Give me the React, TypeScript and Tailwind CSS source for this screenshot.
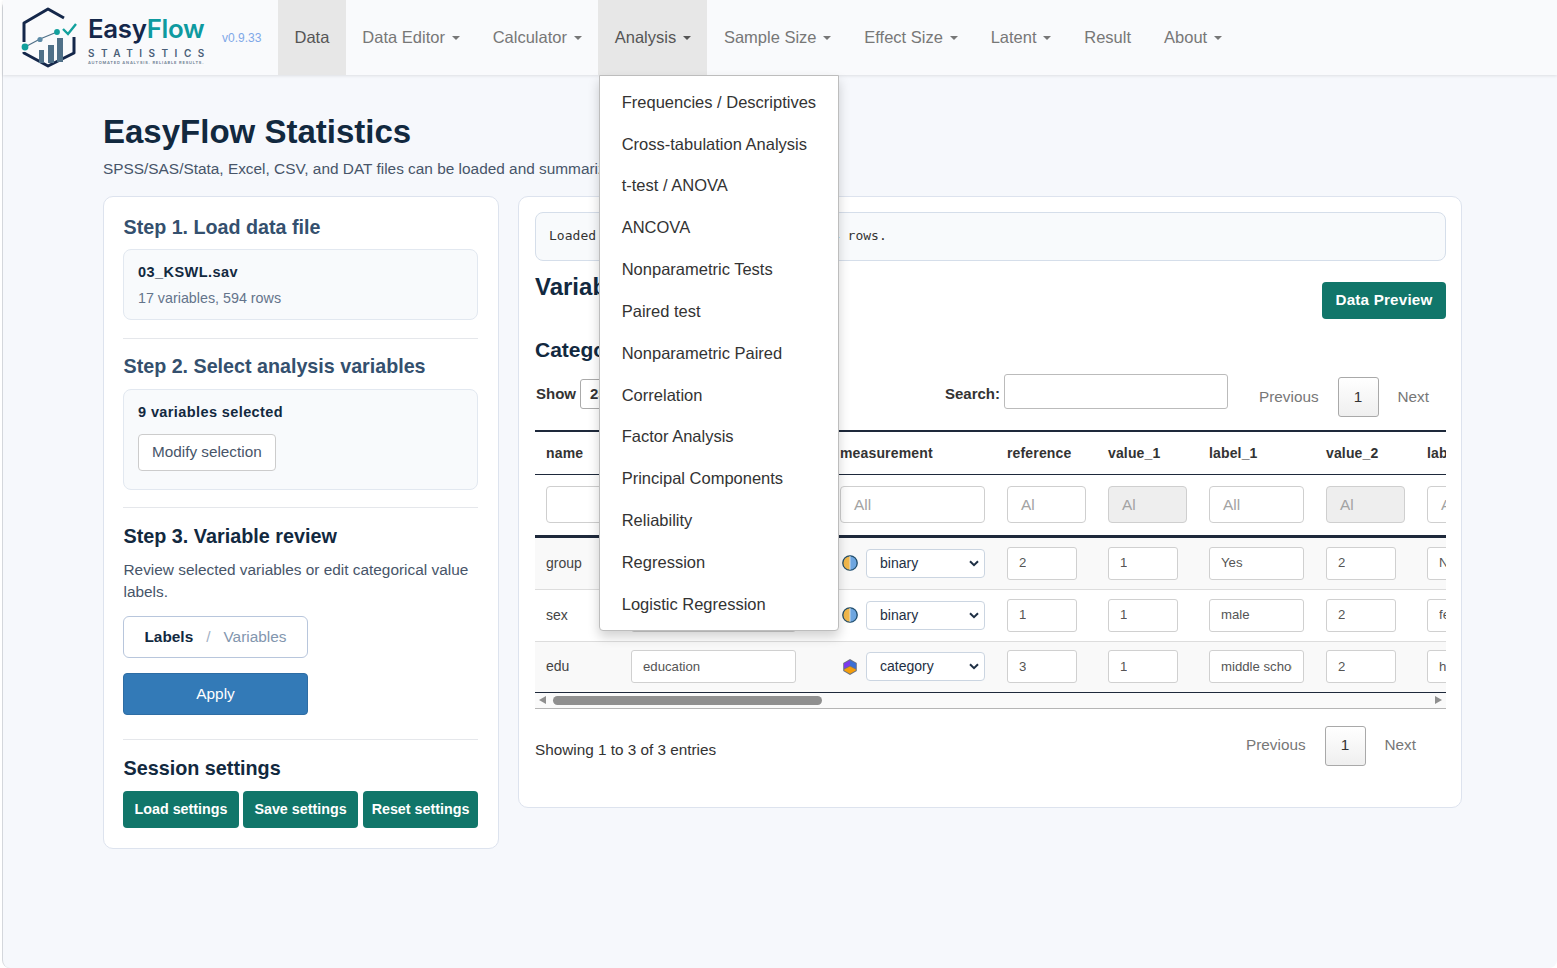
import React from 'react';

const navItems = [
  { label: 'Data', caret: false, active: true },
  { label: 'Data Editor', caret: true },
  { label: 'Calculator', caret: true },
  { label: 'Analysis', caret: true, active: true, open: true },
  { label: 'Sample Size', caret: true },
  { label: 'Effect Size', caret: true },
  { label: 'Latent', caret: true },
  { label: 'Result', caret: false },
  { label: 'About', caret: true },
];

const analysisMenu = [
  'Frequencies / Descriptives',
  'Cross-tabulation Analysis',
  't-test / ANOVA',
  'ANCOVA',
  'Nonparametric Tests',
  'Paired test',
  'Nonparametric Paired',
  'Correlation',
  'Factor Analysis',
  'Principal Components',
  'Reliability',
  'Regression',
  'Logistic Regression',
];

const rows = [
  { name: 'group', label: 'group', kind: 'binary', reference: '2', v1: '1', l1: 'Yes', v2: '2', l2: 'No', height: 'h-[53px]' },
  { name: 'sex', label: 'sex', kind: 'binary', reference: '1', v1: '1', l1: 'male', v2: '2', l2: 'female', height: 'h-[52px]' },
  { name: 'edu', label: 'education', kind: 'category', reference: '3', v1: '1', l1: 'middle school', v2: '2', l2: 'high school', height: 'h-[51px]' },
];

const Logo = () => (
  <svg width="60" height="62" viewBox="20 6 60 62" className="shrink-0">
    <path d="M24 41V22L48 8L64 17" fill="none" stroke="#14274a" strokeWidth="3" strokeLinejoin="round" />
    <path d="M24 51V52L48 65L74 52V36" fill="none" stroke="#14274a" strokeWidth="3" strokeLinejoin="round" />
    <rect x="39" y="49" width="5" height="13" fill="#4f7088" />
    <rect x="48" y="44" width="6" height="18" fill="#4f7088" />
    <rect x="57" y="37" width="6" height="24" fill="#4f7088" />
    <path d="M25 46L40 38L57 31" fill="none" stroke="#4f7088" strokeWidth="1.2" />
    <circle cx="25" cy="46" r="3.4" fill="#12a09d" />
    <circle cx="40" cy="38.5" r="2.6" fill="#5b8aa6" />
    <circle cx="57" cy="31" r="2.9" fill="#12a09d" />
    <path d="M63 28L68 33L76 23" fill="none" stroke="#12a09d" strokeWidth="2.4" />
  </svg>
);

const BinaryIcon = () => (
  <svg width="18" height="18" viewBox="0 0 18 18" className="shrink-0">
    <path d="M9 1.5A7.5 7.5 0 0 0 9 16.5Z" fill="#f2b84b" />
    <path d="M9 1.5A7.5 7.5 0 0 1 9 16.5Z" fill="#6ea6e0" />
    <circle cx="9" cy="9" r="7.2" fill="none" stroke="#24506e" strokeWidth="1.3" />
    <path d="M9 2V16" stroke="#dbe7f2" strokeWidth="0.8" />
  </svg>
);

const CategoryIcon = () => (
  <svg width="18" height="18" viewBox="0 0 18 18" className="shrink-0">
    <path d="M9 1L15.8 5V13L9 17L2.2 13V5Z" fill="#6b7280" />
    <path d="M9 2.2L3 5.6V10.6L9 7.6Z" fill="#7c3aed" />
    <path d="M9 2.2L15 5.6V10.6L9 7.6Z" fill="#3b6fd4" />
    <path d="M3.2 11.4L9 8.6L14.8 11.4V12.4L9 15.8L3.2 12.4Z" fill="#f59e0b" />
  </svg>
);

const ChevronDown = () => (
  <svg width="10" height="7" viewBox="0 0 10 7" className="shrink-0">
    <path d="M1 1.2L5 5.2L9 1.2" fill="none" stroke="#1e2f44" strokeWidth="2" />
  </svg>
);

const Caret = () => (
  <span className="ml-[6.75px] inline-block h-0 w-0 border-x-[4px] border-t-[4px] border-x-transparent border-t-current align-middle" />
);

const Pager = () => (
  <div className="flex items-center text-[15.3px] text-[#777]">
    <span>Previous</span>
    <span className="mx-[19px] flex h-[40px] w-[41px] items-center justify-center rounded-[3px] border border-[#a9a9a9] bg-gradient-to-b from-white to-[#efefef] text-[#333]">
      1
    </span>
    <span>Next</span>
  </div>
);

const TealButton = ({ children, className = '' }: { children: React.ReactNode; className?: string }) => (
  <button className={`h-[37px] rounded-[4px] bg-[#11766a] font-bold text-white ${className}`}>
    {children}
  </button>
);

const CellInput = ({ value, className = '' }: { value: string; className?: string }) => (
  <div className={`flex h-[33px] items-center rounded-[3px] border border-[#d0d0d0] bg-white px-[11px] text-[13.2px] text-[#555] ${className}`}>
    <span className="block overflow-hidden whitespace-nowrap">{value}</span>
  </div>
);

const FilterInput = ({ text = 'All', disabled, className = '' }: { text?: string; disabled?: boolean; className?: string }) => (
  <div className={`flex h-[37px] items-center overflow-hidden rounded-[4px] border border-[#cfcfcf] px-[13px] text-[15.4px] text-[#a3a3a3] ${disabled ? 'bg-[#eeeeee]' : 'bg-white'} ${className}`}>
    {text}
  </div>
);

const headers = ['name', 'label', 'measurement', 'reference', 'value_1', 'label_1', 'value_2', 'label_2'];

const App = () => {
  return (
    <div className="h-[968px] overflow-hidden bg-white pl-[2px] font-['Liberation_Sans',Arial,sans-serif]">
      <div className="h-full rounded-[8px] border-l border-[#d4d7dc] bg-[#f6f8fc]">
        {/* Navbar */}
        <nav className="relative z-20 flex h-[75px] items-stretch bg-[#f9fafc] shadow-[0_1px_3px_rgba(0,0,0,0.1)]">
          <div className="flex w-[275px] shrink-0 items-center pl-[17px]">
            <Logo />
            <div className="ml-[8px] mt-[4px] w-[120px] font-['Inter',sans-serif]">
              <div className="h-[30px] text-[25.8px] font-semibold leading-[30px] tracking-[-0.3px] text-[#14274a]">
                Easy<span className="text-[#0e9aa0]">Flow</span>
              </div>
              <div className="mt-[3px] text-[10px] font-semibold leading-[12px] tracking-[6.5px] text-[#4a5f78]">STATISTICS</div>
              <div className="mt-[1px] whitespace-nowrap text-[4px] font-semibold leading-[6px] tracking-[0.78px] text-[#6a7c90]">AUTOMATED ANALYSIS. RELIABLE RESULTS.</div>
            </div>
            <span className="ml-[14px] text-[12px] text-[#7fa8e8]">v0.9.33</span>
          </div>
          {navItems.map(item => (
            <div
              key={item.label}
              className={`relative flex items-center whitespace-nowrap px-[16.5px] text-[16.5px] ${item.active ? 'bg-[#e7e7e7] text-[#555]' : 'text-[#777]'}`}
            >
              {item.label}
              {item.caret && <Caret />}
              {item.open && (
                <div className="absolute left-[0.5px] top-full z-50 w-[240px] rounded-b-[4px] border border-[#bdbdbd] bg-white py-[5.3px] shadow-[0_6px_12px_rgba(0,0,0,0.18)]">
                  {analysisMenu.map(entry => (
                    <div key={entry} className="flex h-[41.83px] items-center px-[22px] text-[16.5px] text-[#333]">
                      {entry}
                    </div>
                  ))}
                </div>
              )}
            </div>
          ))}
        </nav>

        {/* Page body */}
        <main className="pl-[100px] pt-[36px]">
          <h1 className="text-[33px] font-bold leading-[42px] text-[#12293f]">EasyFlow Statistics</h1>
          <p className="mt-[6px] whitespace-nowrap text-[15.4px] leading-[20px] text-[#475569]">
            SPSS/SAS/Stata, Excel, CSV, and DAT files can be loaded and summarized.
          </p>

          <div className="mt-[17px] grid grid-cols-[396px_944px] items-start gap-[19px]">
            {/* Left panel */}
            <section className="h-[653px] rounded-[10px] border border-[#dde3ee] bg-white pl-[19px] pr-[20px] pt-[17px]">
              <h3 className="ml-[0.5px] text-[19.7px] font-bold leading-[26px] text-[#34506e]">Step 1. Load data file</h3>
              <div className="mt-[9px] h-[71px] rounded-[8px] border border-[#e2e8f0] bg-[#f8fafc] px-[14px] pt-[12px]">
                <div className="text-[14.5px] font-bold leading-[20px] tracking-[0.45px] text-[#12293f]">03_KSWL.sav</div>
                <div className="mt-[6px] text-[14.3px] leading-[20px] text-[#64748b]">17 variables, 594 rows</div>
              </div>
              <hr className="mt-[18px] border-[#e5e7eb]" />

              <h3 className="ml-[0.5px] mt-[14px] text-[19.7px] font-bold leading-[26px] text-[#34506e]">Step 2. Select analysis variables</h3>
              <div className="mt-[10px] h-[101px] rounded-[8px] border border-[#e2e8f0] bg-[#f8fafc] px-[14px] pt-[12px]">
                <div className="text-[14.5px] font-bold leading-[20px] tracking-[0.4px] text-[#12293f]">9 variables selected</div>
                <button className="mt-[12px] h-[37px] rounded-[4px] border border-[#ccc] bg-white px-[13px] text-[15.3px] text-[#475569]">
                  Modify selection
                </button>
              </div>
              <hr className="mt-[17px] border-[#e5e7eb]" />

              <h3 className="ml-[0.5px] mt-[15px] text-[19.8px] font-bold leading-[26px] text-[#12293f]">Step 3. Variable review</h3>
              <p className="ml-[0.5px] mt-[10px] text-[15.4px] leading-[22px] text-[#475569]">
                Review selected variables or edit categorical value labels.
              </p>
              <div className="mt-[13px] flex h-[42px] w-[185px] items-center justify-center rounded-[6px] border border-[#b8c6dc] bg-white text-[15.4px]">
                <span className="font-bold text-[#12293f]">Labels</span>
                <span className="mx-[13px] text-[#a3b1c4]">/</span>
                <span className="text-[#8296ae]">Variables</span>
              </div>
              <button className="mt-[15px] block h-[42px] w-[185px] rounded-[4px] border border-[#2e6da4] bg-[#337ab7] text-[15.4px] text-white">
                Apply
              </button>
              <hr className="mt-[24px] border-[#e5e7eb]" />

              <h3 className="ml-[0.5px] mt-[15px] text-[19.8px] font-bold leading-[26px] text-[#12293f]">Session settings</h3>
              <div className="mt-[10px] flex gap-[4px]">
                <TealButton className="w-[116px] text-[14.3px]">Load settings</TealButton>
                <TealButton className="w-[115px] text-[14.3px]">Save settings</TealButton>
                <TealButton className="ml-[1px] w-[115px] text-[14.3px]">Reset settings</TealButton>
              </div>
            </section>

            {/* Right panel */}
            <section className="h-[612px] rounded-[10px] border border-[#dde3ee] bg-white pl-[16px] pr-[15px] pt-[15px]">
              <div className="flex h-[49px] items-center rounded-[8px] border border-[#d5deea] bg-[#f8fafc] px-[13px] pb-[2px] font-['DejaVu_Sans_Mono',monospace] text-[13px] tracking-[0.03px] text-[#333]">
                Loaded 03_KSWL.sav, 17 columns by 594 rows.
              </div>

              <div className="mt-[21px] flex h-[37px] items-start justify-between">
                <h2 className="text-[24px] font-bold leading-[10px] text-[#12293f]">Variable review</h2>
                <TealButton className="w-[124px] text-[15.2px] tracking-[0.2px]">Data Preview</TealButton>
              </div>

              <h3 className="mt-[18px] text-[21px] font-bold leading-[26px] text-[#12293f]">Categorical variables</h3>

              <div className="mt-[6px] flex h-[50px] items-center text-[15px] text-[#333]">
                <span className="ml-[1px] font-bold">Show</span>
                <span className="ml-[4px] flex h-[30px] w-[60px] items-center rounded-[3px] border border-[#aaa] bg-white pl-[9px] font-bold">25</span>
                <span className="ml-auto font-bold">Search:</span>
                <span className="-mt-[6px] ml-[4px] h-[35px] w-[224px] rounded-[3px] border border-[#bbb] bg-white" />
                <span className="ml-[31px] mr-[17px] mt-[6px]">
                  <Pager />
                </span>
              </div>

              {/* Table clipped horizontally, like a scrolling DataTable */}
              <div className="mt-[11px] w-[911px] overflow-hidden">
                <table className="w-[998px] table-fixed border-collapse text-left">
                  <colgroup>
                    <col className="w-[85px]" />
                    <col className="w-[209px]" />
                    <col className="w-[167px]" />
                    <col className="w-[101px]" />
                    <col className="w-[101px]" />
                    <col className="w-[117px]" />
                    <col className="w-[101px]" />
                    <col className="w-[117px]" />
                  </colgroup>
                  <thead>
                    <tr className="h-[43px] border-y-2 border-b border-[#1e293b]">
                      {headers.map(h => (
                        <th key={h} className="whitespace-nowrap px-[11px] pt-[2px] text-[14px] font-bold tracking-[0.15px] text-[#333]">{h}</th>
                      ))}
                    </tr>
                    <tr className="h-[62px] border-b-[3px] border-[#1e293b]">
                      <th className="px-[11px] font-normal"><FilterInput text="" /></th>
                      <th className="px-[11px] font-normal"><FilterInput text="" className="w-[165px]" /></th>
                      <th className="px-[11px] font-normal"><FilterInput className="w-[145px]" /></th>
                      <th className="px-[11px] font-normal"><FilterInput text="Al" className="w-[79px]" /></th>
                      <th className="px-[11px] font-normal"><FilterInput text="Al" disabled className="w-[79px]" /></th>
                      <th className="px-[11px] font-normal"><FilterInput className="w-[95px]" /></th>
                      <th className="px-[11px] font-normal"><FilterInput text="Al" disabled className="w-[79px]" /></th>
                      <th className="px-[11px] font-normal"><FilterInput className="w-[95px]" /></th>
                    </tr>
                  </thead>
                  <tbody>
                    {rows.map((row, i) => (
                      <tr key={row.name} className={`${row.height} border-b ${i === 2 ? 'border-[#1e293b]' : 'border-[#dddddd]'} ${i % 2 === 0 ? 'bg-[#f9f9f9]' : 'bg-white'}`}>
                        <td className="px-[11px] text-[14px] text-[#444]">{row.name}</td>
                        <td className="px-[11px]"><CellInput value={row.label} className="w-[165px]" /></td>
                        <td className="px-[11px]">
                          <div className="flex items-center">
                            <span className="ml-[1px] mr-[7px]">{row.kind === 'binary' ? <BinaryIcon /> : <CategoryIcon />}</span>
                            <div className="flex h-[29px] w-[119px] items-center justify-between rounded-[4px] border border-[#cbd5e1] bg-white pl-[13px] pr-[5px] text-[14px] text-[#1e2f44]">
                              {row.kind}
                              <ChevronDown />
                            </div>
                          </div>
                        </td>
                        <td className="px-[11px]"><CellInput value={row.reference} className="w-[70px]" /></td>
                        <td className="px-[11px]"><CellInput value={row.v1} className="w-[70px]" /></td>
                        <td className="px-[11px]"><CellInput value={row.l1} className="w-[95px]" /></td>
                        <td className="px-[11px]"><CellInput value={row.v2} className="w-[70px]" /></td>
                        <td className="px-[11px]"><CellInput value={row.l2} className="w-[95px]" /></td>
                      </tr>
                    ))}
                  </tbody>
                </table>

                {/* Scrollbar */}
                <div className="flex h-[16px] items-center border-b border-[#b5b5b5] bg-[#fafafa] pl-[4px] pr-[4px]">
                  <span className="h-0 w-0 border-y-[4.5px] border-r-[7px] border-y-transparent border-r-[#8f8f8f]" />
                  <span className="ml-[7px] h-[9px] w-[269px] rounded-full bg-[#8f8f8f]" />
                  <span className="ml-auto h-0 w-0 border-y-[4.5px] border-l-[7px] border-y-transparent border-l-[#8f8f8f]" />
                </div>
              </div>

              <div className="mt-[17px] flex items-center justify-between pr-[30px]">
                <span className="mt-[10px] text-[15.3px] text-[#333]">Showing 1 to 3 of 3 entries</span>
                <Pager />
              </div>
            </section>
          </div>
        </main>
      </div>
    </div>
  );
};

export default App;
